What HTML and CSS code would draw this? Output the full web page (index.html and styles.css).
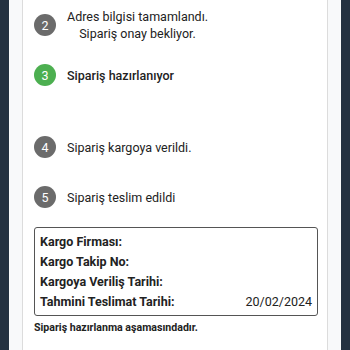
FILE: index.html
```html
<!DOCTYPE html>
<html lang="tr">
<head>
<meta charset="utf-8">
<link rel="stylesheet" href="styles.css">
</head>
<body>
<div class="outer">
  <div class="card">
    <div class="step">
      <span class="num">2</span>
      <div class="label center">Adres bilgisi tamamlandı.<br>Sipariş onay bekliyor.</div>
    </div>
    <div class="step current">
      <span class="num green">3</span>
      <div class="label bold">Sipariş hazırlanıyor</div>
    </div>
    <div class="step">
      <span class="num">4</span>
      <div class="label">Sipariş kargoya verildi.</div>
    </div>
    <div class="step">
      <span class="num">5</span>
      <div class="label">Sipariş teslim edildi</div>
    </div>
    <div class="info">
      <div class="row"><span class="key">Kargo Firması:</span><span class="val"></span></div>
      <div class="row"><span class="key">Kargo Takip No:</span><span class="val"></span></div>
      <div class="row"><span class="key">Kargoya Veriliş Tarihi:</span><span class="val"></span></div>
      <div class="row"><span class="key">Tahmini Teslimat Tarihi:</span><span class="val">20/02/2024</span></div>
    </div>
    <p class="note">Sipariş hazırlanma aşamasındadır.</p>
  </div>
</div>
</body>
</html>
```
FILE: styles.css
```css
html, body {
  margin: 0;
  padding: 0;
  height: 100%;
}
body {
  background: #243140;
  font-family: Roboto, "Noto Sans", sans-serif;
  color: #222;
}
.outer {
  margin: 0 9px;
  height: 100%;
  background: #f8f9fa;
  padding: 0 13px;
  box-sizing: border-box;
}
.card {
  height: 100%;
  background: #fff;
  border-left: 1px solid #dcdcdc;
  border-right: 1px solid #dcdcdc;
  padding: 0 9px 0 11px;
  box-sizing: border-box;
  overflow: hidden;
}
.step {
  height: 50px;
  display: flex;
  align-items: center;
  gap: 11px;
}
.step.current {
  margin-bottom: 22px;
}
.num {
  flex: none;
  width: 22px;
  height: 22px;
  border-radius: 50%;
  background: #6b6b6b;
  color: #fff;
  font-size: 12.5px;
  display: flex;
  align-items: center;
  justify-content: center;
}
.num.green {
  background: #4caf50;
}
.label {
  font-size: 12.5px;
  line-height: 17px;
}
.label.center {
  text-align: center;
}
.label.bold {
  font-weight: 500;
}
.info {
  margin-top: 5px;
  border: 1px solid #555;
  border-radius: 3px;
  padding: 4px 5px 3px 5px;
}
.row {
  display: flex;
  justify-content: space-between;
  font-size: 12.5px;
  line-height: 20px;
}
.key {
  font-weight: 700;
}
.note {
  margin: 6px 0 0;
  font-size: 10.6px;
  font-weight: 700;
  line-height: 12px;
}
```
